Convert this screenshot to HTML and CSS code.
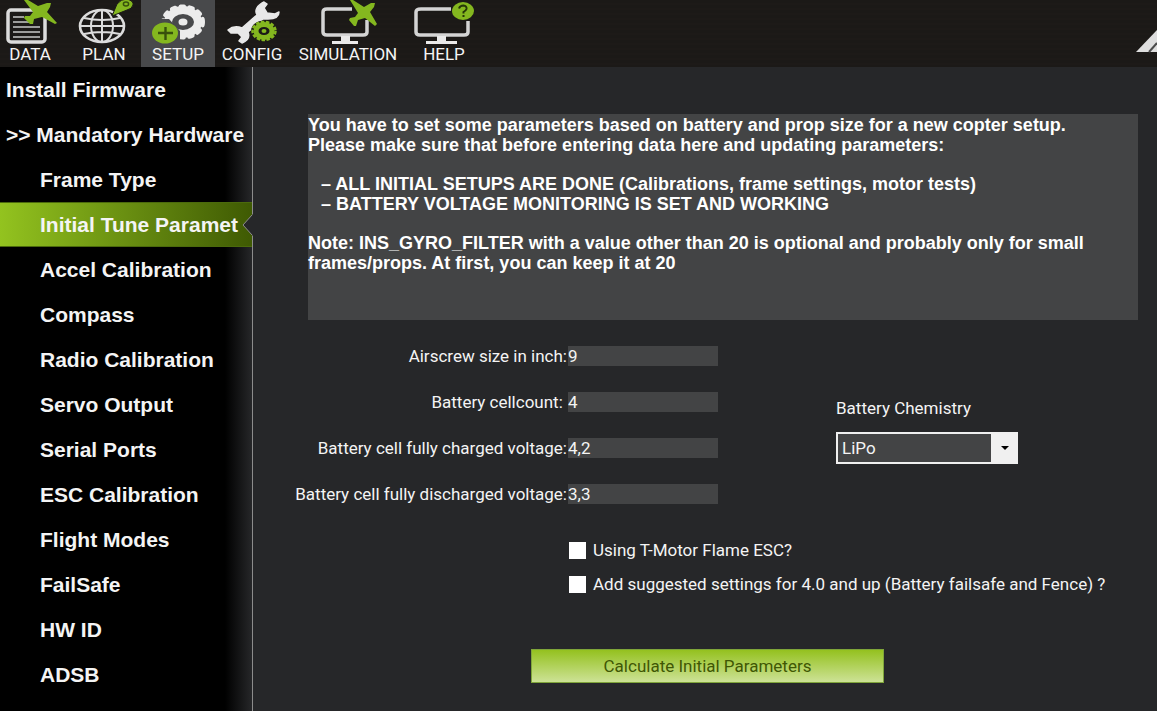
FILE: index.html
```html
<!DOCTYPE html>
<html lang="en">
<head>
  <meta charset="UTF-8" />
  <title>Initial Tune Parameters</title>
  <link rel="stylesheet" href="styles.css">
</head>
<body>

  <header class="toolbar">
    <nav class="tabs">
      <a href="#data" class="tab">
        <svg width="74" height="46" viewBox="0 0 74 46">
          <rect x="15" y="10" width="37" height="32" rx="3" fill="none" stroke="#dcdcdc" stroke-width="3.5"/>
          <path d="M20 17h11M20 22h18M20 27h27M20 32h27M20 37h27" stroke="#c9c9c9" stroke-width="1.6"/>
          <path d="M31 0H35L45 6L54 3H58L57 7L54 12L64 23L62 24L49 17L41 19L40 24H37L31 18L32 16L37 16L40 12Z" fill="#84b71f"/>
        </svg>
        <span>DATA</span>
      </a>
      <a href="#plan" class="tab">
        <svg width="74" height="46" viewBox="0 0 74 46">
          <g fill="none" stroke="#dcdcdc" stroke-width="2">
            <ellipse cx="35" cy="26" rx="22" ry="16" stroke-width="2.6"/>
            <ellipse cx="35" cy="26" rx="11" ry="16"/>
            <path d="M35 10v32M13 26h44M17 18q18 4 36 0M17 34q18 -4 36 0"/>
          </g>
          <path d="M45 16L50 4Q54 -1 60 -1Q67 1 66 5Q65 9 60 10Z" fill="#84b71f" stroke="#1b1917" stroke-width="1"/>
          <ellipse cx="59" cy="4" rx="2.6" ry="2" fill="none" stroke="#36500b" stroke-width="1.5"/>
        </svg>
        <span>PLAN</span>
      </a>
      <a href="#setup" class="tab active">
        <svg width="74" height="46" viewBox="0 0 74 46">
          <ellipse cx="42" cy="22" rx="15" ry="12" fill="none" stroke="#ececec" stroke-width="8"/>
          <ellipse cx="42" cy="22" rx="20" ry="15.500" fill="none" stroke="#ececec" stroke-width="4" stroke-linecap="round" stroke-dasharray="3.500 5.500"/>
          <path d="M10 19H28L39 31V46H10Z" fill="#48494b"/>
          <ellipse cx="42" cy="22" rx="4.500" ry="3.500" fill="#ececec"/>
          <ellipse cx="24" cy="33" rx="13" ry="10.500" fill="#84b71f"/>
          <path d="M17 33h15M24.500 27v13" stroke="#37500c" stroke-width="2.4"/>
        </svg>
        <span>SETUP</span>
      </a>
      <a href="#config" class="tab">
        <svg width="74" height="46" viewBox="0 0 74 46">
          <path d="M13 30Q19 25 27 28L42 15Q38 8 49 2L52 4L49 8L52 13L60 14L64 12Q64 19 53 19L48 19L33 32Q36 39 27 43L24 41L27 37L23 33L16 33Z" fill="#e8e8e8" stroke="#e8e8e8" stroke-width="1.500" stroke-linejoin="round"/>
          <ellipse cx="49" cy="31" rx="13" ry="10.500" fill="#1b1917"/>
          <ellipse cx="49" cy="31" rx="8" ry="6.500" fill="none" stroke="#84b71f" stroke-width="5"/>
          <ellipse cx="49" cy="31" rx="11.500" ry="9" fill="none" stroke="#84b71f" stroke-width="2.500" stroke-dasharray="3.500 1.500"/>
          <ellipse cx="49" cy="31" rx="2.500" ry="2" fill="#84b71f"/>
        </svg>
        <span>CONFIG</span>
      </a>
      <a href="#simulation" class="tab">
        <svg width="118" height="46" viewBox="0 0 118 46">
          <path d="M63 9H38Q34 9 34 12V32Q34 35 38 35H74Q78 35 78 32V20" fill="none" stroke="#d4d4d4" stroke-width="3.500"/>
          <path d="M52 36h9v5h8v3H43v-3h9z" fill="#eaeaea"/>
          <path d="M61 0H64L75 7L82 3H86L85 7L81 12L88 24L86 26L76 18L69 20L67 26H65L60 20L61 18L66 17L69 13Z" fill="#84b71f"/>
        </svg>
        <span>SIMULATION</span>
      </a>
      <a href="#help" class="tab">
        <svg width="74" height="46" viewBox="0 0 74 46">
          <path d="M44 9H14Q9 9 9 12V32Q9 35 13 35H57Q61 35 61 32V21" fill="none" stroke="#d4d4d4" stroke-width="3.500"/>
          <path d="M30 36h9v5h11v3H19v-3h11z" fill="#eaeaea"/>
          <ellipse cx="56" cy="11" rx="11" ry="9" fill="#84b71f"/>
          <path d="M52 8.500Q53 5.500 56.500 5.500Q60 6 59.500 9Q59 10.500 56.500 12V13.500M56.500 15v2" fill="none" stroke="#263508" stroke-width="2"/>
        </svg>
        <span>HELP</span>
      </a>
    </nav>
    <svg class="logo" width="21" height="24" viewBox="0 0 21 24">
      <path d="M0 23L21 1V23Z" fill="#dedede"/>
      <path d="M13 23L21 14" stroke="#4b4b4b" stroke-width="2"/>
    </svg>
  </header>

  <div class="page">
    <nav class="sidebar">
      <a href="#install">Install Firmware</a>
      <a href="#mandatory">&gt;&gt; Mandatory Hardware</a>
      <a href="#frame" class="sub">Frame Type</a>
      <a href="#tune" class="sub selected">Initial Tune Paramet
        <svg class="notch" width="11" height="22" viewBox="0 0 11 22">
          <path d="M11 0L1 11L11 22Z" fill="#262729"/>
          <path d="M10 1L1 11L10 21" fill="none" stroke="#8c8c8c"/>
        </svg>
      </a>
      <a href="#accel" class="sub">Accel Calibration</a>
      <a href="#compass" class="sub">Compass</a>
      <a href="#radio" class="sub">Radio Calibration</a>
      <a href="#servo" class="sub">Servo Output</a>
      <a href="#serial" class="sub">Serial Ports</a>
      <a href="#esc" class="sub">ESC Calibration</a>
      <a href="#modes" class="sub">Flight Modes</a>
      <a href="#failsafe" class="sub">FailSafe</a>
      <a href="#hwid" class="sub">HW ID</a>
      <a href="#adsb" class="sub">ADSB</a>
    </nav>

    <main>
      <div class="info">
        <p>You have to set some parameters based on battery and prop size for a new copter setup.<br>
        Please make sure that before entering data here and updating parameters:</p>
        <ul>
          <li>– ALL INITIAL SETUPS ARE DONE (Calibrations, frame settings, motor tests)</li>
          <li>– BATTERY VOLTAGE MONITORING IS SET AND WORKING</li>
        </ul>
        <p>Note: INS_GYRO_FILTER with a value other than 20 is optional and probably only for small<br>
        frames/props. At first, you can keep it at 20</p>
      </div>

      <form>
        <div class="columns">
          <div class="fields">
            <label for="prop">Airscrew size in inch:</label>
            <input type="text" id="prop" value="9">
            <label for="cells">Battery cellcount:&nbsp;</label>
            <input type="text" id="cells" value="4">
            <label for="charged">Battery cell fully charged voltage:</label>
            <input type="text" id="charged" value="4,2">
            <label for="discharged">Battery cell fully discharged voltage:</label>
            <input type="text" id="discharged" value="3,3">
          </div>
          <div class="chemistry">
            <label for="chem">Battery Chemistry</label>
            <div class="select">
              <select id="chem">
                <option>LiPo</option>
                <option>LiPoHV</option>
                <option>LiIon</option>
              </select>
              <span class="arrow"></span>
            </div>
          </div>
        </div>

        <div class="checks">
          <label><input type="checkbox"> Using T-Motor Flame ESC?</label>
          <label><input type="checkbox"> Add suggested settings for 4.0 and up (Battery failsafe and Fence) ?</label>
        </div>

        <button type="button">Calculate Initial Parameters</button>
      </form>
    </main>
  </div>

</body>
</html>
```
FILE: styles.css
```css
* {
  box-sizing: border-box;
}
body {
  margin: 0;
  min-height: 100vh;
  display: flex;
  flex-direction: column;
  background: #262729;
  color: #f4f4f4;
  font-family: Roboto, "Liberation Sans", sans-serif;
  font-size: 17px;
}
a {
  color: inherit;
  text-decoration: none;
}

/* top bar */
.toolbar {
  display: flex;
  justify-content: space-between;
  height: 67px;
  overflow: hidden;
  background: repeating-linear-gradient(#1b1917 0 3px, #1d1a18 3px 5px);
}
.tabs {
  display: flex;
  margin-left: -7px;
}
.tab {
  min-width: 74px;
  display: flex;
  flex-direction: column;
  align-items: center;
}
.tab span {
  line-height: 16px;
}
.tab.active {
  background: #48494b;
}
.logo {
  margin-top: 29px;
}

.page {
  flex: 1;
  display: flex;
}

/* left menu */
.sidebar {
  width: 253px;
  flex-shrink: 0;
  border-right: 1px solid #8c8c8c;
  background: linear-gradient(to right, #000 225px, #262729);
  font: bold 21px "Liberation Sans", Arial, sans-serif;
}
.sidebar a {
  display: block;
  height: 45px;
  padding-left: 6px;
  line-height: 45px;
  white-space: nowrap;
}
.sidebar .sub {
  padding-left: 40px;
}
.sidebar .selected {
  position: relative;
  background: linear-gradient(to right, #93c31f, #3f5a03);
  border-top: 1px solid #4b6a0c;
  border-bottom: 1px solid #4b6a0c;
  line-height: 43px;
}
.notch {
  position: absolute;
  right: -1px;
  top: 11px;
}

/* content */
main {
  flex: 1;
  padding: 47px 19px 28px 0;
}
.info {
  min-height: 206px;
  margin-left: 55px;
  padding-top: 1px;
  background: #434445;
  color: #fff;
  font: bold 18px/20px "Liberation Sans", Arial, sans-serif;
}
.info p {
  margin: 0;
}
.info ul {
  margin: 19px 0;
  padding-left: 13px;
  list-style: none;
}
.columns {
  display: flex;
  gap: 118px;
  margin-top: 26px;
}
.fields {
  display: grid;
  grid-template-columns: 314px 150px;
  gap: 26px 1px;
  align-items: center;
}
.fields label {
  text-align: right;
  white-space: nowrap;
  line-height: 20px;
}
.fields input {
  width: 150px;
  height: 20px;
  padding: 0;
  border: 0;
  background: #434445;
  color: inherit;
  font: inherit;
}
.chemistry {
  padding-top: 52px;
}
.chemistry label {
  display: block;
  margin-bottom: 14px;
  line-height: 20px;
}
.select {
  position: relative;
  width: 182px;
}
.select select {
  width: 100%;
  height: 32px;
  padding: 0 4px;
  border: 2px solid #f0f0f0;
  border-radius: 0;
  background: #434445;
  color: inherit;
  font: inherit;
  appearance: none;
}
.arrow {
  position: absolute;
  top: 0;
  right: 0;
  width: 27px;
  height: 32px;
  background: #f0f0f0;
  pointer-events: none;
}
.arrow::after {
  content: "";
  position: absolute;
  left: 10px;
  top: 14px;
  border: 4px solid transparent;
  border-top-color: #000;
}
.checks {
  display: flex;
  flex-direction: column;
  gap: 14px;
  margin: 36px 0 0 316px;
}
.checks label {
  display: flex;
  align-items: center;
  gap: 7px;
  line-height: 20px;
}
.checks input {
  appearance: none;
  width: 17px;
  height: 17px;
  margin: 0;
  background: #fff;
}
.checks input:checked {
  background: #84b71f;
}
form button {
  display: block;
  width: 353px;
  height: 34px;
  margin: 55px 0 0 278px;
  border: 1px solid #7fa53a;
  background: linear-gradient(#94c11f, #cde296);
  color: #405704;
  font: inherit;
}
```
